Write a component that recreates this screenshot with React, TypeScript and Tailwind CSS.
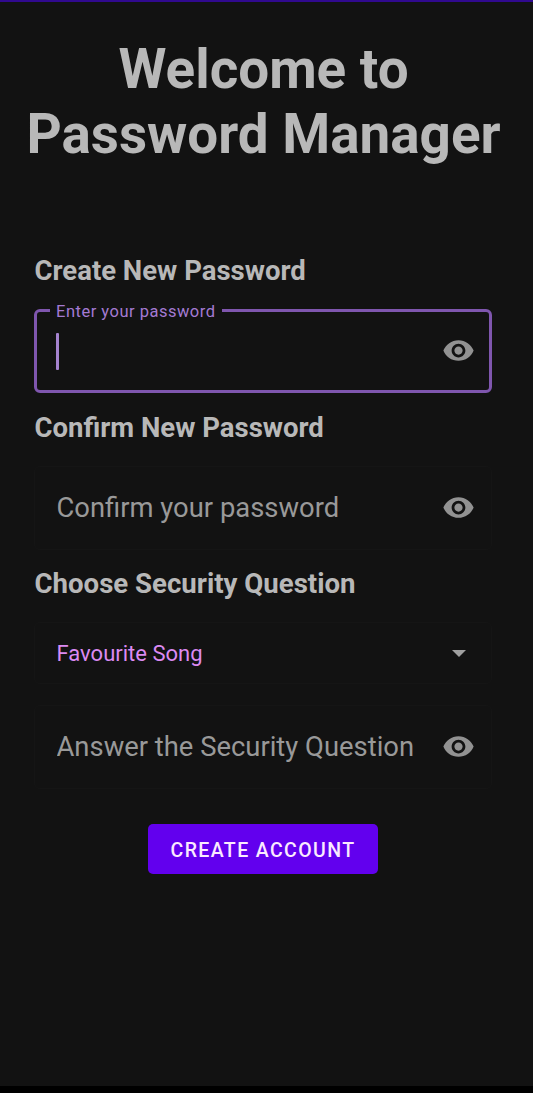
import { useState } from "react";

interface EyeToggleProps {
  label: string;
  onClick: () => void;
}

function EyeToggle({ label, onClick }: EyeToggleProps) {
  return (
    <button
      type="button"
      aria-label={label}
      onClick={onClick}
      className="mb-px shrink-0 cursor-pointer text-[#929292]"
    >
      <svg viewBox="0 0 24 24" className="block size-[33px]" fill="currentColor">
        <path d="M12 4.5C7 4.5 2.73 7.61 1 12c1.73 4.39 6 7.5 11 7.5s9.27-3.11 11-7.5c-1.73-4.39-6-7.5-11-7.5zM12 17c-2.76 0-5-2.24-5-5s2.24-5 5-5 5 2.24 5 5-2.24 5-5 5zm0-8c-1.66 0-3 1.34-3 3s1.34 3 3 3 3-1.34 3-3-1.34-3-3-3z" />
      </svg>
    </button>
  );
}

interface SecretFieldProps {
  placeholder: string;
}

function SecretField({ placeholder }: SecretFieldProps) {
  const [visible, setVisible] = useState(false);

  return (
    <div className="flex h-[84px] items-center rounded-md border border-[#151515] pr-4 pl-[21.5px]">
      <input
        type={visible ? "text" : "password"}
        placeholder={placeholder}
        className="mt-px min-w-0 flex-1 bg-transparent text-[27.4px] text-[#b8b8b8] outline-none placeholder:text-[#999999]"
      />
      <EyeToggle label="Toggle visibility" onClick={() => setVisible(!visible)} />
    </div>
  );
}

export default function App() {
  return (
    <div className="flex h-[1093px] w-full flex-col overflow-hidden border-t-2 border-b-[7px] border-t-[#30098f] border-b-black bg-[#121212] font-[Roboto,sans-serif] text-[#b8b8b8]">
      <h1 className="mt-[35px] pr-[6px] text-center text-[54.8px] leading-[65px] font-bold">
        Welcome to
        <br />
        Password Manager
      </h1>

      <form className="mt-[88px] mr-[41px] ml-[34px] flex flex-col">
        <h2 className="pl-[0.5px] text-[27.5px] leading-[32px] font-bold">
          Create New Password
        </h2>
        <div className="relative mt-[22px] flex h-[84px] items-center rounded-md border-[3px] border-[#7f56ae] pr-[14px] pl-[19px]">
          <span className="absolute -top-[10px] left-[13px] bg-[#121212] px-[6px] text-[16.5px] leading-5 tracking-[0.5px] text-[#a47ad2]">
            Enter your password
          </span>
          <span className="h-[37px] w-[3px] rounded-[1px] bg-[#a583cf]" />
          <span className="flex-1" />
          <EyeToggle label="Toggle password" onClick={() => {}} />
        </div>

        <h2 className="mt-[19px] mb-[22px] pl-[0.5px] text-[27.5px] leading-[32px] font-bold">
          Confirm New Password
        </h2>
        <SecretField placeholder="Confirm your password" />

        <h2 className="mt-[18px] mb-[22px] pl-[0.5px] text-[27.6px] leading-[32px] font-bold">
          Choose Security Question
        </h2>
        <button
          type="button"
          className="flex h-[62px] items-center justify-between rounded-md border border-[#151515] pr-[25.5px] pl-[21.5px] text-[22px] text-[#dc8af2]"
        >
          Favourite Song
          <svg viewBox="0 0 14 7" className="h-[7px] w-[14px]" fill="#a0a0a0">
            <path d="M0 0h14L7 7z" />
          </svg>
        </button>
        <div className="mt-[21px]">
          <SecretField placeholder="Answer the Security Question" />
        </div>

        <button
          type="submit"
          className="mt-[35px] h-[50px] w-[230px] self-center rounded-[5px] bg-[#6200ee] pt-[3px] text-[19.5px] font-medium tracking-[1.4px] text-[#fbeaff]"
        >
          CREATE ACCOUNT
        </button>
      </form>
    </div>
  );
}
